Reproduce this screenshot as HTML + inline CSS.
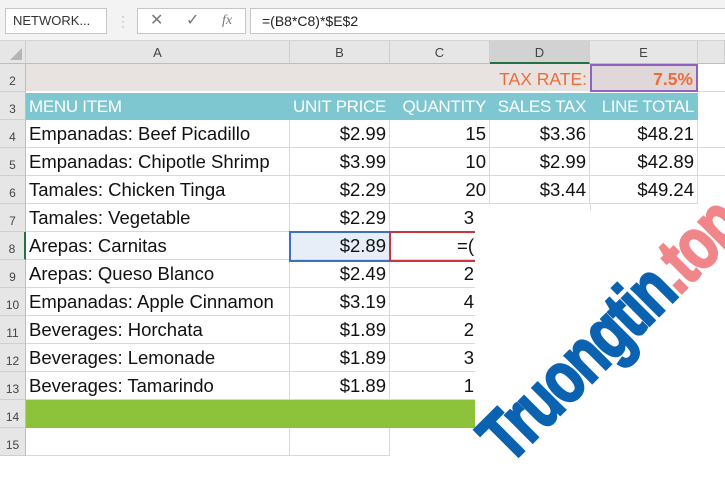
<!DOCTYPE html>
<html><head><style>
body{margin:0;width:725px;height:455px;overflow:hidden;background:#fff;font-family:"Liberation Sans",sans-serif;position:relative}
.a{position:absolute;box-sizing:border-box}
.tb{left:0;top:0;width:725px;height:41px;background:#f3f3f3;border-bottom:1px solid #d4d4d4}
.box{background:#fff;border:1px solid #c6c6c6}
.ch{top:41px;height:23px;background:#e6e6e6;border-right:1px solid #cfcfcf;border-bottom:1px solid #bdbdbd;font-size:13px;color:#444;text-align:center;line-height:23px}
.rh{left:0;width:26px;height:28px;background:#e6e6e6;border-bottom:1px solid #cfcfcf;border-right:1px solid #bdbdbd;font-size:12px;color:#444;text-align:center;line-height:34px}
.c{height:28px;border-right:1px solid #d9d9d9;border-bottom:1px solid #d9d9d9;font-size:18.5px;line-height:28px;color:#111;white-space:nowrap;overflow:hidden;padding:0 3px}
.r{text-align:right}
.h{background:#7ec6d0;color:#fff;border-color:#7ec6d0;font-size:17px;letter-spacing:-0.3px}
.cc{width:85px!important;border-right:none;padding-right:1px}
</style></head><body>
<div class="a tb"></div>
<div class="a box" style="left:5px;top:8px;width:102px;height:26px;font-size:13px;line-height:24px;padding-left:7px;color:#333">NETWORK... <span style="color:#888;font-size:9px;margin-left:4px">▼</span></div>
<div class="a" style="left:121px;top:14px;color:#aaa;font-size:12px;line-height:5px">·<br>·<br>·</div>
<div class="a box" style="left:137px;top:8px;width:109px;height:26px;color:#777;font-size:16px;line-height:24px"><span style="position:absolute;left:12px">✕</span><span style="position:absolute;left:48px">✓</span><span style="position:absolute;left:84px;font-family:'Liberation Serif';font-style:italic;font-size:14px">fx</span></div>
<div class="a box" style="left:250px;top:8px;width:480px;height:26px;font-size:14px;line-height:24px;padding-left:11px;color:#222">=(B8*C8)*$E$2</div>
<div class="a ch" style="left:0;width:26px;background:#e6e6e6"><div style="position:absolute;right:3px;bottom:3px;width:0;height:0;border-left:12px solid transparent;border-bottom:12px solid #b5b5b5"></div></div>
<div class="a ch" style="left:26px;width:264px">A</div>
<div class="a ch" style="left:290px;width:100px">B</div>
<div class="a ch" style="left:390px;width:100px">C</div>
<div class="a ch" style="left:490px;width:100px;background:#d2d2d2;border-bottom:2px solid #217346">D</div>
<div class="a ch" style="left:590px;width:108px">E</div>
<div class="a ch" style="left:698px;width:27px"></div>

<div class="a rh" style="top:64px">2</div><div class="a rh" style="top:92px">3</div><div class="a rh" style="top:120px">4</div><div class="a rh" style="top:148px">5</div><div class="a rh" style="top:176px">6</div><div class="a rh" style="top:204px">7</div><div class="a rh" style="top:232px;border-right:2px solid #217346">8</div><div class="a rh" style="top:260px">9</div><div class="a rh" style="top:288px">10</div><div class="a rh" style="top:316px">11</div><div class="a rh" style="top:344px">12</div><div class="a rh" style="top:372px">13</div><div class="a rh" style="top:400px">14</div><div class="a rh" style="top:428px">15</div>

<div class="a" style="left:26px;top:64px;width:672px;height:27px;background:#e8e3e1"></div>
<div class="a" style="left:26px;top:91px;width:672px;height:2px;background:#fff"></div>
<div class="a" style="left:698px;top:64px;width:27px;height:28px;border-bottom:1px solid #d9d9d9"></div>
<div class="a c r" style="left:390px;top:64px;width:200px;border:none;color:#ed6d3a;line-height:30px;font-size:17.5px">TAX RATE:</div>
<div class="a c r" style="left:590px;top:64px;width:108px;background:#e0d7da;border:2px solid #8e62c0;color:#ed6d3a;font-weight:bold;line-height:26px;font-size:17.5px">7.5%</div>

<div class="a c h" style="left:26px;top:93px;width:264px;height:27px">MENU ITEM</div>
<div class="a c h r" style="left:290px;top:93px;width:100px;height:27px">UNIT PRICE</div>
<div class="a c h r" style="left:390px;top:93px;width:100px;height:27px">QUANTITY</div>
<div class="a c h r" style="left:490px;top:93px;width:100px;height:27px">SALES TAX</div>
<div class="a c h r" style="left:590px;top:93px;width:108px;height:27px">LINE TOTAL</div>

<div class="a c" style="left:26px;top:120px;width:264px">Empanadas: Beef Picadillo</div><div class="a c r" style="left:290px;top:120px;width:100px">$2.99</div><div class="a c r" style="left:390px;top:120px;width:100px">15</div><div class="a c r" style="left:490px;top:120px;width:100px">$3.36</div><div class="a c r" style="left:590px;top:120px;width:108px">$48.21</div><div class="a c" style="left:698px;top:120px;width:27px;border-right:none"></div>
<div class="a c" style="left:26px;top:148px;width:264px">Empanadas: Chipotle Shrimp</div><div class="a c r" style="left:290px;top:148px;width:100px">$3.99</div><div class="a c r" style="left:390px;top:148px;width:100px">10</div><div class="a c r" style="left:490px;top:148px;width:100px">$2.99</div><div class="a c r" style="left:590px;top:148px;width:108px">$42.89</div><div class="a c" style="left:698px;top:148px;width:27px;border-right:none"></div>
<div class="a c" style="left:26px;top:176px;width:264px">Tamales: Chicken Tinga</div><div class="a c r" style="left:290px;top:176px;width:100px">$2.29</div><div class="a c r" style="left:390px;top:176px;width:100px">20</div><div class="a c r" style="left:490px;top:176px;width:100px">$3.44</div><div class="a c r" style="left:590px;top:176px;width:108px">$49.24</div>
<div class="a" style="left:475px;top:204px;width:250px;height:251px;background:#fff"></div>
<div class="a" style="left:590px;top:204px;width:1px;height:6px;background:#d9d9d9"></div>
<div class="a c" style="left:26px;top:204px;width:264px">Tamales: Vegetable</div><div class="a c r" style="left:290px;top:204px;width:100px">$2.29</div><div class="a c r cc" style="left:390px;top:204px">3</div>
<div class="a c" style="left:26px;top:232px;width:264px">Arepas: Carnitas</div><div class="a c r" style="left:290px;top:232px;width:100px;background:#e7eef8">$2.89</div><div class="a c r cc" style="left:390px;top:232px">=(</div>
<div class="a c" style="left:26px;top:260px;width:264px">Arepas: Queso Blanco</div><div class="a c r" style="left:290px;top:260px;width:100px">$2.49</div><div class="a c r cc" style="left:390px;top:260px">2</div>
<div class="a c" style="left:26px;top:288px;width:264px">Empanadas: Apple Cinnamon</div><div class="a c r" style="left:290px;top:288px;width:100px">$3.19</div><div class="a c r cc" style="left:390px;top:288px">4</div>
<div class="a c" style="left:26px;top:316px;width:264px">Beverages: Horchata</div><div class="a c r" style="left:290px;top:316px;width:100px">$1.89</div><div class="a c r cc" style="left:390px;top:316px">2</div>
<div class="a c" style="left:26px;top:344px;width:264px">Beverages: Lemonade</div><div class="a c r" style="left:290px;top:344px;width:100px">$1.89</div><div class="a c r cc" style="left:390px;top:344px">3</div>
<div class="a c" style="left:26px;top:372px;width:264px">Beverages: Tamarindo</div><div class="a c r" style="left:290px;top:372px;width:100px">$1.89</div><div class="a c r cc" style="left:390px;top:372px">1</div>
<div class="a" style="left:26px;top:400px;width:449px;height:28px;background:#8dc23b"></div>
<div class="a c" style="left:26px;top:428px;width:264px"></div><div class="a c" style="left:290px;top:428px;width:100px"></div><div class="a c cc" style="left:390px;top:428px;border-bottom:none"></div>

<div class="a" style="left:289px;top:231px;width:102px;height:31px;border:2px solid #3b70c4"></div>
<div class="a" style="left:389px;top:231px;width:86px;height:31px;border:2px solid #c8373f;border-right:none"></div>

<div class="a" style="left:440px;top:300px;width:340px;height:60px;transform:rotate(-45deg) scaleY(1.3);transform-origin:center;font-family:'Liberation Sans';font-weight:900;font-size:56px;line-height:60px;color:#0a62b0;letter-spacing:-2px;white-space:nowrap;text-align:center;-webkit-text-stroke:2px currentColor">Truongtin<span style="color:#f0868a">.top</span></div>
</body></html>
